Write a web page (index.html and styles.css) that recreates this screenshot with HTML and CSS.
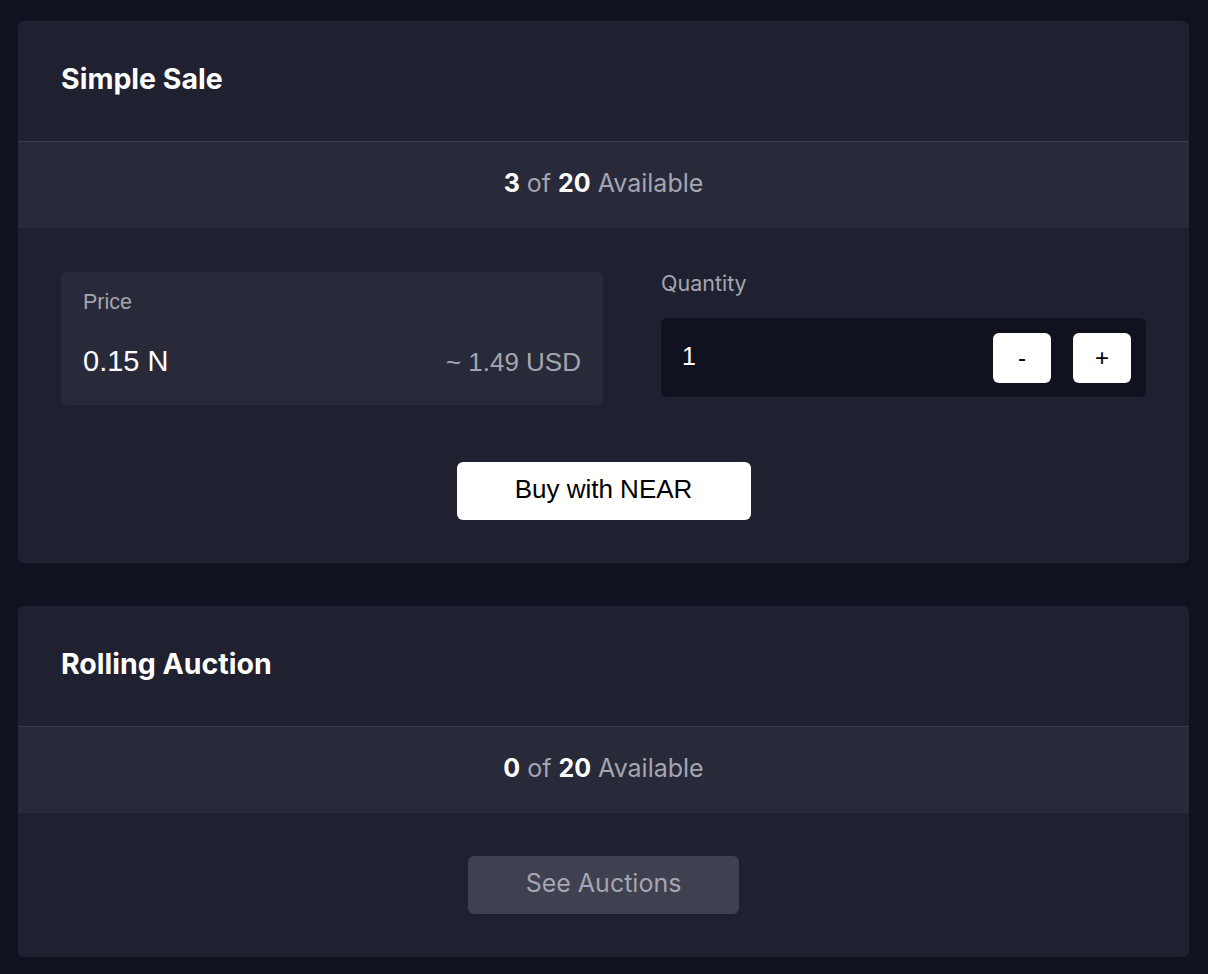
FILE: index.html
```html
<!DOCTYPE html>
<html>
<head>
<meta charset="utf-8">
<link rel="stylesheet" href="styles.css">
</head>
<body>
<main class="page">
  <section class="card">
    <header class="card-head"><h2 class="card-title">Simple Sale</h2></header>
    <div class="band"><b>3</b> of <b>20</b> Available</div>
    <div class="card-body">
      <div class="sale-grid">
        <div class="price-box">
          <div class="label">Price</div>
          <div class="price-row">
            <span class="price-near">0.15 N</span>
            <span class="price-usd">~ 1.49 USD</span>
          </div>
        </div>
        <div class="qty">
          <div class="qty-label">Quantity</div>
          <div class="qty-box">
            <span class="qty-value">1</span>
            <div class="qty-btns">
              <button class="step">-</button>
              <button class="step">+</button>
            </div>
          </div>
        </div>
      </div>
      <div class="actions"><button class="btn-buy">Buy with NEAR</button></div>
    </div>
  </section>

  <section class="card">
    <header class="card-head"><h2 class="card-title">Rolling Auction</h2></header>
    <div class="band"><b>0</b> of <b>20</b> Available</div>
    <div class="card-body">
      <div class="actions single"><button class="btn-see">See Auctions</button></div>
    </div>
  </section>
</main>
</body>
</html>
```

FILE: styles.css
```css
* { box-sizing: border-box; }
html, body { margin: 0; padding: 0; }
body {
  background: #10121f;
  font-family: Inter, "Liberation Sans", sans-serif;
  color: #fff;
}
.page {
  padding: 21px 19px 0 18px;
  display: flex;
  flex-direction: column;
  gap: 43px;
}
.card {
  background: #1f2130;
  border-radius: 6px;
  overflow: hidden;
}
.card-head {
  height: 121px;
  padding: 0 43px;
  display: flex;
  align-items: center;
  border-bottom: 1px solid #3a3c4b;
}
.card-title {
  margin: 0;
  font-size: 28.5px;
  font-weight: 700;
  padding-bottom: 6px;
}
.band {
  background: #282a39;
  height: 86px;
  display: flex;
  align-items: center;
  justify-content: center;
  font-size: 25px;
  color: #a4a5b0;
  white-space: pre;
  padding-bottom: 4px;
}
.band b { color: #fff; font-weight: 700; }
.card-body {
  padding: 44px 43px 43px;
}
.sale-grid {
  display: grid;
  grid-template-columns: 542px 1fr;
  gap: 58px;
  align-items: start;
}
.price-box {
  background: #282a39;
  border-radius: 6px;
  height: 133px;
  padding: 18px 22px 0 22px;
  font-family: "Liberation Sans", Arial, sans-serif;
}
.label {
  font-size: 21.5px;
  color: #a4a5b0;
}
.price-row {
  display: flex;
  justify-content: space-between;
  align-items: baseline;
  margin-top: 30px;
}
.price-near { font-size: 29px; color: #fff; }
.price-usd { font-size: 26px; color: #a4a5b0; }
.qty-label {
  font-size: 21.5px;
  color: #a4a5b0;
  height: 46px;
  line-height: 22px;
}
.qty-box {
  background: #10121f;
  border-radius: 6px;
  height: 79px;
  display: flex;
  align-items: center;
  justify-content: space-between;
  padding: 0 15px 0 21px;
}
.qty-value {
  font-family: "Liberation Sans", Arial, sans-serif;
  font-size: 25px;
  margin-top: -2px;
}
.qty-btns { display: flex; gap: 22px; }
.step {
  width: 58px;
  height: 50px;
  border: 0;
  border-radius: 6px;
  background: #fff;
  color: #000;
  font-family: "Liberation Sans", Arial, sans-serif;
  font-size: 24px;
  padding: 0;
}
.actions {
  display: flex;
  justify-content: center;
  margin-top: 57px;
}
.actions.single { margin-top: -1px; }
.btn-buy {
  width: 294px;
  height: 58px;
  border: 0;
  border-radius: 6px;
  background: #fff;
  color: #000;
  font-family: "Liberation Sans", Arial, sans-serif;
  font-size: 26px;
  padding: 0 0 4px;
}
.btn-see {
  width: 271px;
  height: 58px;
  border: 0;
  border-radius: 6px;
  background: #3f4150;
  color: #a4a5b0;
  font-family: Inter, sans-serif;
  font-size: 25px;
  padding: 0 0 4px;
}
```
